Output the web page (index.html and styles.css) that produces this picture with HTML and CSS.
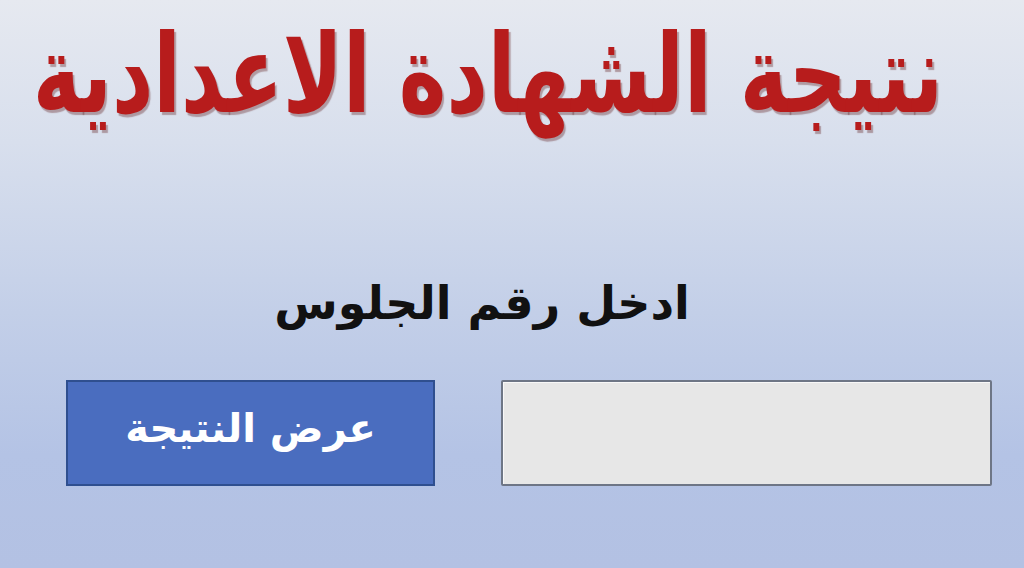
FILE: index.html
```html
<!DOCTYPE html>
<html lang="ar" dir="rtl">
<head>
<meta charset="utf-8">
<title>نتيجة الشهادة الاعدادية</title>
<link rel="stylesheet" href="styles.css">
</head>
<body>
<main class="page">
  <h1 class="title"><span class="title-text">نتيجة الشهادة الاعدادية</span></h1>
  <p class="label">ادخل رقم الجلوس</p>
  <div class="form-row">
    <input class="seat-input" type="text" aria-label="رقم الجلوس">
    <button class="submit-btn" type="button">عرض النتيجة</button>
  </div>
</main>
</body>
</html>
```

FILE: styles.css
```css
html, body {
  margin: 0;
  padding: 0;
}
body {
  width: 1024px;
  height: 568px;
  overflow: hidden;
  background: linear-gradient(to bottom, #e6e9f0 0%, #d8dfed 25%, #c3cfe8 55%, #b4c3e5 80%, #b3c1e3 100%);
  font-family: "DejaVu Sans", "Noto Sans", sans-serif;
}
.page {
  display: flex;
  flex-direction: column;
  height: 568px;
}
.title {
  margin: 0;
  padding: 20px 48px 0 0;
  height: 140px;
  box-sizing: border-box;
  text-align: center;
  font-family: "DejaVu Sans Condensed", "DejaVu Sans", sans-serif;
  font-size: 96px;
  font-weight: bold;
  line-height: 1;
  color: #b71c1c;
  white-space: nowrap;
}
.title-text {
  display: inline-block;
  transform: scale(0.935, 1.14);
  transform-origin: center top;
  text-shadow: 2px 2px 1px rgba(90, 20, 20, 0.35);
}
.label {
  margin: 0;
  padding: 140px 60px 0 0;
  height: 100px;
  box-sizing: content-box;
  text-align: center;
  font-size: 46px;
  font-weight: bold;
  color: #111;
  line-height: 1;
}
.form-row {
  display: flex;
  gap: 66px;
  padding: 0 32px 0 66px;
}
.seat-input {
  width: 491px;
  height: 106px;
  box-sizing: border-box;
  margin: 0;
  background: #e7e7e7;
  border: 2px solid #6e7686;
  border-radius: 2px;
  box-shadow: inset 1px 1px 0 #f8f8f8;
  outline: none;
  font: inherit;
}
.submit-btn {
  width: 369px;
  height: 106px;
  box-sizing: border-box;
  margin: 0;
  background: #4a6dbf;
  border: 2px solid #2f4f8f;
  color: #fff;
  font-family: "DejaVu Sans", sans-serif;
  font-size: 40px;
  font-weight: bold;
  padding: 0 0 10px 0;
}
```
